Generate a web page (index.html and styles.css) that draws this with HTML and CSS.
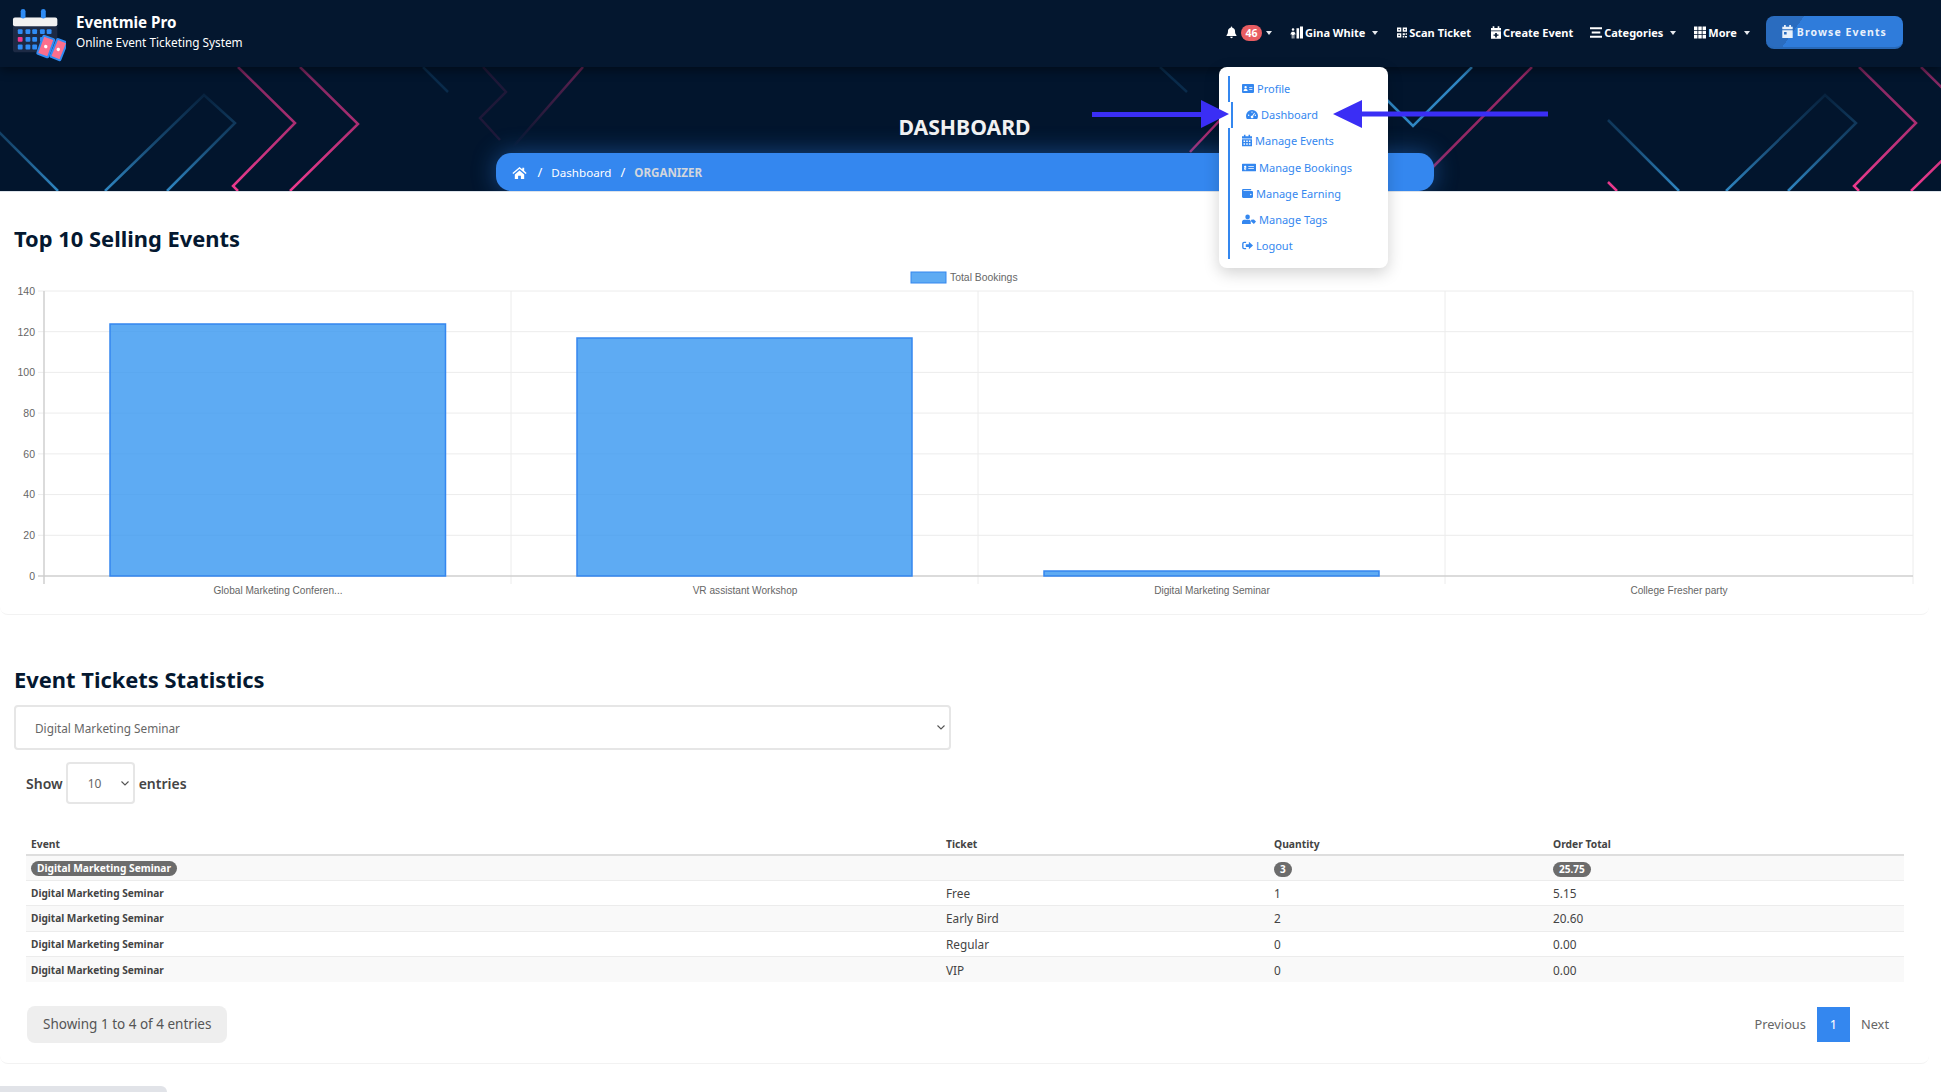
FILE: index.html
```html
<!DOCTYPE html>
<html>
<head>
    <title>Eventmie Pro - Dashboard</title>
    <link rel="stylesheet" href="styles.css">
</head>
<body>
    <svg class="icon-defs" width="0" height="0">
        <symbol id="i-bell" viewBox="1 1 14 15"><path d="M8 1a1 1 0 0 1 1 1v.6A4.5 4.5 0 0 1 12.5 7c0 3 .8 4 1.8 5v1H1.7v-1c1-1 1.8-2 1.8-5A4.5 4.5 0 0 1 7 2.6V2a1 1 0 0 1 1-1zM6.300 14h3.400a1.700 1.700 0 0 1-3.400 0z"/></symbol>
        <symbol id="i-user" viewBox="0 1 15 14"><path d="M7.500 3h3v12h-3zM11.500 1h3.500v14h-3.500zM3.500 3a1.500 1.500 0 1 1 0 3 1.500 1.500 0 0 1 0-3zM2 7h3l1.500 3-1 .6L5 9.500V15H4v-4H3v4H2V9.500l-.6 1.100-1-.6z"/></symbol>
        <symbol id="i-qr" viewBox="1 1 14 14"><path fill-rule="evenodd" d="M1 1h6v6H1zM3 3v2h2V3zM9 1h6v6H9zM11 3v2h2V3zM1 9h6v6H1zM3 11v2h2v-2zM9 9h3v3H9zM13 9h2v2h-2zM9 13h2v2H9zM12 13h3v2h-3z"/></symbol>
        <symbol id="i-cal-plus" viewBox="2 0 12 15"><path fill-rule="evenodd" d="M4 0h2v2h4V0h2v2h2v3H2V2h2zM2 6h12v9H2zM7 8v2H5v1.500h2v2h2v-2h2V10H9V8z"/></symbol>
        <symbol id="i-bars" viewBox="1 2 14 12"><path d="M1 2h14v2.200H1zM3 6.900h10v2.200H3zM1 11.800h14V14H1z"/></symbol>
        <symbol id="i-th" viewBox="1 1 14 14"><path d="M1 1h4v4H1zM6 1h4v4H6zM11 1h4v4h-4zM1 6h4v4H1zM6 6h4v4H6zM11 6h4v4h-4zM1 11h4v4H1zM6 11h4v4H6zM11 11h4v4h-4z"/></symbol>
        <symbol id="i-cal-day" viewBox="2 0 12 15"><path fill-rule="evenodd" d="M4 0h2v2h4V0h2v2h2v3H2V2h2zM2 6h12v9H2zM4 8v3h3V8z"/></symbol>
        <symbol id="i-home" viewBox="0 0 16 16"><path d="M8 2 .4 8.400l1 1.100L8 4l6.600 5.500 1-1.100L13 6.200V3h-2v1.500zM3 10.200V15h3.500v-3.500h3V15H13v-4.800L8 5.800z"/></symbol>
        <symbol id="i-id" viewBox=".5 2.500 15 11"><path fill-rule="evenodd" d="M1.500 2.500h13a1 1 0 0 1 1 1v9a1 1 0 0 1-1 1h-13a1 1 0 0 1-1-1v-9a1 1 0 0 1 1-1zM5 5a1.500 1.500 0 1 0 0 3 1.500 1.500 0 0 0 0-3zM2.500 11h5c0-1.500-1-2.300-2.500-2.300S2.500 9.500 2.500 11zM9.500 6v1.200h4V6zM9.500 8.800V10h4V8.800z"/></symbol>
        <symbol id="i-gauge" viewBox=".5 2.500 15 11.200"><path fill-rule="evenodd" d="M8 2.500a7.500 7.500 0 0 0-6.500 11.200h13A7.500 7.500 0 0 0 8 2.500zM8 4.200a.9.900 0 1 1 0 1.800.9.900 0 0 1 0-1.800zM3.800 8.200a.9.900 0 1 1 0 1.800.9.900 0 0 1 0-1.800zM12.200 8.200a.9.900 0 1 1 0 1.800.9.900 0 0 1 0-1.800zM10.800 5.900l.9.6-2.400 3.700a1.600 1.600 0 1 1-1-.6z"/></symbol>
        <symbol id="i-cal" viewBox="1.500 0 13 15"><path fill-rule="evenodd" d="M4 0h2v2h4V0h2v2h2.500v3h-13V2H4zM1.500 6h13v9h-13zM3.500 7.500v2h2v-2zM7 7.500v2h2v-2zM10.500 7.500v2h2v-2zM3.500 11v2h2v-2zM7 11v2h2v-2zM10.500 11v2h2v-2z"/></symbol>
        <symbol id="i-money" viewBox="0 2.500 20 11"><path fill-rule="evenodd" d="M1 2.500h18a1 1 0 0 1 1 1v9a1 1 0 0 1-1 1H1a1 1 0 0 1-1-1v-9a1 1 0 0 1 1-1zM4 5v1H3v1.500h2v.5H3v3h1v1h1v-1h1V9.500H4V9h2V6H5V5zM9 6v1h8V6zM9 9v1h8V9z"/></symbol>
        <symbol id="i-wallet" viewBox=".5 2 15 12"><path fill-rule="evenodd" d="M2 2h11v1.500H2.500v1H14a1.500 1.500 0 0 1 1.500 1.500v6.500A1.500 1.500 0 0 1 14 14H2a1.500 1.500 0 0 1-1.500-1.500v-9A1.500 1.500 0 0 1 2 2zM12.500 8.500a1 1 0 1 0 0 2 1 1 0 0 0 0-2z"/></symbol>
        <symbol id="i-user-tag" viewBox="0 1.500 20 14"><path d="M8 1.500a3.300 3.300 0 1 1 0 6.600 3.300 3.300 0 0 1 0-6.600zM3 9h8l1.500 1.500V15H0v-2.500C0 10.500 1 9 3 9zM13 9l4-.5 3 3-3 3.500-4-3.500z"/></symbol>
        <symbol id="i-logout" viewBox="0 2 16 12"><path d="M10 2.500 16 8l-6 5.500V10H5.500V6H10zM6 2.500v2H3a.8.800 0 0 0-.8.8v5.400a.8.800 0 0 0 .8.8h3v2H3a2.800 2.800 0 0 1-2.800-2.800V5.300A2.800 2.800 0 0 1 3 2.500z"/></symbol>
    </svg>

    <header class="topbar">
        <a class="brand">
            <svg class="brand-logo" viewBox="0 0 56 60">
                <rect x="1" y="13" width="46" height="36" rx="3" fill="#1d2a44"/>
                <rect x="1" y="13" width="46" height="9" rx="2" fill="#f1f1f1"/>
                <rect x="9" y="4" width="5" height="10" rx="2.500" fill="#2f8cf5"/>
                <rect x="30" y="4" width="5" height="10" rx="2.500" fill="#2f8cf5"/>
                <g fill="#2f8cf5">
                    <rect x="6" y="25" width="5" height="5" rx="1"/><rect x="14" y="25" width="5" height="5" rx="1"/><rect x="21" y="25" width="5" height="5" rx="1"/><rect x="29" y="25" width="5" height="5" rx="1"/><rect x="36" y="25" width="5" height="5" rx="1"/>
                    <rect x="14" y="33" width="5" height="5" rx="1"/><rect x="21" y="33" width="5" height="5" rx="1"/><rect x="29" y="33" width="5" height="5" rx="1"/>
                    <rect x="6" y="41" width="5" height="5" rx="1"/><rect x="14" y="41" width="5" height="5" rx="1"/><rect x="21" y="41" width="5" height="5" rx="1"/>
                </g>
                <rect x="6" y="33" width="5" height="5" rx="1" fill="#f0388f"/>
                <g transform="rotate(20 35 43)"><rect x="29" y="33" width="12" height="20" rx="1" fill="#fb6f8d" stroke="#2f8cf5" stroke-width="2"/><circle cx="35" cy="43" r="1.800" fill="#fff"/></g>
                <g transform="rotate(22 48 46)"><rect x="43" y="36" width="11" height="20" rx="1" fill="#fb6f8d" stroke="#2f8cf5" stroke-width="2"/><circle cx="48" cy="46" r="1.800" fill="#fff"/></g>
            </svg>
            <span class="brand-text">
                <strong>Eventmie Pro</strong>
                <span>Online Event Ticketing System</span>
            </span>
        </a>
        <nav class="topnav">
            <a class="nav-item nav-bell"><svg class="ico ico-w11"><use href="#i-bell"/></svg><span class="badge">46</span><i class="caret"></i></a>
            <a class="nav-item nav-user"><svg class="ico ico-w13"><use href="#i-user"/></svg>Gina White<i class="caret"></i></a>
            <a class="nav-item nav-scan"><svg class="ico ico-w10"><use href="#i-qr"/></svg>Scan Ticket</a>
            <a class="nav-item nav-create"><svg class="ico ico-w10"><use href="#i-cal-plus"/></svg>Create Event</a>
            <a class="nav-item"><svg class="ico ico-w12"><use href="#i-bars"/></svg>Categories<i class="caret"></i></a>
            <a class="nav-item"><svg class="ico ico-w12"><use href="#i-th"/></svg>More<i class="caret"></i></a>
            <a class="browse-btn"><svg class="ico ico-w11"><use href="#i-cal-day"/></svg>Browse Events</a>
        </nav>
    </header>

    <section class="hero">
        <svg class="hero-lines" viewBox="0 67 1941 124" width="1941" height="124">
            <defs>
                <linearGradient id="fade-blue" gradientUnits="userSpaceOnUse" x1="0" y1="95" x2="0" y2="191">
                    <stop offset="0" stop-color="#2f86c2" stop-opacity=".12"/>
                    <stop offset=".5" stop-color="#2f86c2" stop-opacity=".45"/>
                    <stop offset="1" stop-color="#2f86c2"/>
                </linearGradient>
                <linearGradient id="fade-pink" gradientUnits="userSpaceOnUse" x1="0" y1="67" x2="0" y2="191">
                    <stop offset="0" stop-color="#e8358a" stop-opacity=".5"/>
                    <stop offset="1" stop-color="#ee3a8e"/>
                </linearGradient>
                <linearGradient id="fade-down" gradientUnits="userSpaceOnUse" x1="0" y1="67" x2="0" y2="147">
                    <stop offset="0" stop-color="#c52f78" stop-opacity=".5"/>
                    <stop offset="1" stop-color="#c52f78" stop-opacity="0"/>
                </linearGradient>
                <g id="tile" fill="none" stroke-width="2.500">
                    <g stroke="url(#fade-blue)">
                        <path d="M-13 120 58 191"/>
                        <path d="M105 191 204 95 235 123 167 191"/>
                    </g>
                    <g stroke="url(#fade-pink)">
                        <path d="M238 67 295 123 233 186 238 191"/>
                        <path d="M300 67 358 124 290 191"/>
                        <path d="M-13 182-4 191"/>
                    </g>
                    <path d="M423 67 448 92" stroke="#2f86c2" opacity=".2"/>
                    <path d="M483 67 506 92 480 118 500 140" stroke="#c52f78" opacity=".15"/>
                    <path d="M583 67 513 147" stroke="url(#fade-down)"/>
                    <path d="M1160 67 1187 92" stroke="#2f86c2" opacity=".2"/>
                    <path d="M1270 67 1190 152" stroke="#d0307d" opacity=".8"/>
                    <path d="M1387 100 1413 126 1472 67" stroke="#2f86c2"/>
                    <path d="M1532 67 1433 167" stroke="#c52f78" opacity=".75"/>
                </g>
            </defs>
            <use href="#tile"/>
            <use href="#tile" x="1621"/>
        </svg>
        <div class="hero-inner">
            <h1>DASHBOARD</h1>
            <div class="crumbs">
                <svg class="ico crumb-home"><use href="#i-home"/></svg>
                <span class="crumb-sep">/</span>
                <a>Dashboard</a>
                <span class="crumb-sep">/</span>
                <b>ORGANIZER</b>
            </div>
        </div>
    </section>

    <!-- profile menu, open -->
    <div class="menu">
        <a class="menu-item"><svg class="ico ico-w12"><use href="#i-id"/></svg>Profile</a>
        <a class="menu-item is-active"><svg class="ico ico-w12"><use href="#i-gauge"/></svg>Dashboard</a>
        <a class="menu-item"><svg class="ico ico-w10"><use href="#i-cal"/></svg>Manage Events</a>
        <a class="menu-item"><svg class="ico ico-w14"><use href="#i-money"/></svg>Manage Bookings</a>
        <a class="menu-item"><svg class="ico ico-w11"><use href="#i-wallet"/></svg>Manage Earning</a>
        <a class="menu-item"><svg class="ico ico-w14"><use href="#i-user-tag"/></svg>Manage Tags</a>
        <a class="menu-item"><svg class="ico ico-w11"><use href="#i-logout"/></svg>Logout</a>
    </div>

    <!-- annotation arrows -->
    <svg class="arrows" viewBox="0 0 1941 140" width="1941" height="140">
        <path d="M1092 112H1201V100L1229 114 1201 128V117H1092z"/>
        <path d="M1548 111.500H1362V100L1333 114 1362 128V116.500H1548z"/>
    </svg>

    <main>
        <section class="panel panel-chart">
            <h2>Top 10 Selling Events</h2>
            <svg class="chart" viewBox="0 265 1929 345" width="1929" height="345">
                <rect class="legend-box" x="911" y="272" width="35" height="11"/>
                <text class="legend" x="950" y="281">Total Bookings</text>

                <g class="grid">
                    <path d="M38 291H1913M38 331.700H1913M38 372.400H1913M38 413.100H1913M38 453.900H1913M38 494.600H1913M38 535.300H1913"/>
                    <path d="M511 291V584M978 291V584M1445 291V584M1913 291V584"/>
                </g>
                <path class="axis" d="M44 291V584M38 576H1913"/>

                <rect class="bar" x="110" y="324" width="335.5" height="252"/>
                <rect class="bar" x="577" y="338" width="335" height="238"/>
                <rect class="bar" x="1044" y="571" width="335" height="5"/>

                <g class="ticks">
                    <text x="35" y="295">140</text>
                    <text x="35" y="336">120</text>
                    <text x="35" y="376">100</text>
                    <text x="35" y="417">80</text>
                    <text x="35" y="458">60</text>
                    <text x="35" y="498">40</text>
                    <text x="35" y="539">20</text>
                    <text x="35" y="580">0</text>
                </g>
                <g class="labels">
                    <text x="278" y="594">Global Marketing Conferen...</text>
                    <text x="745" y="594">VR assistant Workshop</text>
                    <text x="1212" y="594">Digital Marketing Seminar</text>
                    <text x="1679" y="594">College Fresher party</text>
                </g>
            </svg>
        </section>

        <section class="panel panel-stats">
            <h2>Event Tickets Statistics</h2>
            <select class="event-select">
                <option>Digital Marketing Seminar</option>
            </select>

            <div class="length-row">
                <label>Show</label>
                <select class="length-select"><option>10</option></select>
                <label>entries</label>
            </div>

            <table class="stats">
                <thead>
                    <tr><th>Event</th><th>Ticket</th><th>Quantity</th><th>Order Total</th></tr>
                </thead>
                <tbody>
                    <tr>
                        <td class="name"><span class="pill">Digital Marketing Seminar</span></td>
                        <td></td>
                        <td><span class="pill pill-num">3</span></td>
                        <td><span class="pill pill-num">25.75</span></td>
                    </tr>
                    <tr><td class="name">Digital Marketing Seminar</td><td>Free</td><td>1</td><td>5.15</td></tr>
                    <tr><td class="name">Digital Marketing Seminar</td><td>Early Bird</td><td>2</td><td>20.60</td></tr>
                    <tr><td class="name">Digital Marketing Seminar</td><td>Regular</td><td>0</td><td>0.00</td></tr>
                    <tr><td class="name">Digital Marketing Seminar</td><td>VIP</td><td>0</td><td>0.00</td></tr>
                </tbody>
            </table>

            <div class="table-foot">
                <div class="info">Showing 1 to 4 of 4 entries</div>
                <div class="pager">
                    <a>Previous</a>
                    <a class="current">1</a>
                    <a>Next</a>
                </div>
            </div>
        </section>
    </main>

    <div class="status-strip"></div>
</body>
</html>
```

FILE: styles.css
```css
* {
    box-sizing: border-box;
}
body {
    margin: 0;
    font-family: "Noto Sans", "Open Sans", sans-serif;
    background: #fff;
    color: #333;
    overflow-x: hidden;
}
.icon-defs {
    position: absolute;
}
.ico {
    width: 13px;
    height: 13px;
    fill: currentColor;
    flex: none;
}
.ico-w10 { width: 10px; }
.ico-w11 { width: 11px; }
.ico-w12 { width: 12px; }
.ico-w13 { width: 13px; }
.ico-w14 { width: 14px; }

/* top bar */
.topbar {
    height: 67px;
    display: flex;
    align-items: center;
    justify-content: space-between;
    padding: 0 38px 0 12px;
    background: #04172f;
    color: #fff;
    position: relative;
    z-index: 2;
    box-shadow: 0 3px 10px rgba(0, 0, 0, 0.45);
}
.brand {
    display: flex;
    align-items: center;
    gap: 10px;
}
.brand-logo {
    width: 54px;
    height: 58px;
}
.brand-text {
    display: flex;
    flex-direction: column;
    font-size: 11.8px;
    line-height: 20px;
    margin-top: -4px;
}
.brand-text strong {
    font-size: 15.2px;
    font-weight: 700;
}
.topnav {
    display: flex;
    align-items: center;
    margin-top: -2px;
}
.nav-item {
    display: flex;
    align-items: center;
    gap: 2px;
    font-size: 11px;
    font-weight: 700;
    margin-right: 18px;
    white-space: nowrap;
}
.nav-user {
    margin-right: 19px;
}
.nav-scan {
    margin-right: 20px;
}
.nav-create {
    margin-right: 17px;
}
.nav-item .caret {
    margin-left: 5px;
}
.nav-bell {
    gap: 4px;
}
.nav-bell .caret {
    margin-left: 0;
}
.caret {
    width: 0;
    height: 0;
    border-left: 3.5px solid transparent;
    border-right: 3.5px solid transparent;
    border-top: 4px solid #e6e9ee;
}
.badge {
    background: #e85d62;
    border-radius: 10px;
    width: 21px;
    text-align: center;
    font-size: 10.5px;
    line-height: 16px;
}
.browse-btn {
    display: flex;
    align-items: center;
    gap: 4px;
    height: 33px;
    padding: 0 16px 0 16px;
    margin-left: -2px;
    border-radius: 8px;
    font-size: 10.5px;
    font-weight: 700;
    letter-spacing: 1.1px;
    color: #e9f1fb;
    background: linear-gradient(125deg, #2a6cbf 24%, #2f7cdb 24%);
    border-bottom: 2px solid #2869b8;
}

/* page title band */
.hero {
    height: 125px;
    position: relative;
    background: #02152d;
    border-bottom: 1px solid #dde3ea;
    overflow: hidden;
    color: #fff;
}
.hero-lines {
    position: absolute;
    top: 0;
    left: 0;
}
.hero-inner {
    position: relative;
    height: 124px;
    width: 1929px;
    display: flex;
    flex-direction: column;
    align-items: center;
    justify-content: flex-end;
}
.hero h1 {
    margin: 0 0 12px;
    font-size: 21.2px;
    line-height: 28px;
    font-weight: 700;
    color: #f2f2f2;
}
.crumbs {
    width: 938px;
    height: 38px;
    display: flex;
    align-items: center;
    gap: 9px;
    padding-left: 16px;
    background: #3487ef;
    border-radius: 15px;
    box-shadow: 0 0 24px rgba(52, 135, 239, 0.45);
    font-size: 11.6px;
}
.crumb-home {
    width: 15px;
    height: 15px;
    margin-right: 2px;
}
.crumb-sep {
    font-size: 13px;
}
.crumbs b {
    color: #d2d6dc;
    font-weight: 700;
}

/* dropdown */
.menu {
    position: absolute;
    top: 67px;
    left: 1219px;
    width: 169px;
    height: 201px;
    padding: 8.5px 0 0 9px;
    background: #fff;
    border-radius: 8px;
    box-shadow: 0 5px 16px rgba(0, 0, 0, 0.18);
    z-index: 3;
}
.menu-item {
    display: flex;
    align-items: center;
    gap: 3px;
    height: 26.2px;
    padding-left: 12px;
    border-left: 2px solid #3487ef;
    font-size: 11px;
    color: #3487ef;
    white-space: nowrap;
}
.menu-item.is-active {
    margin-left: 3px;
    padding-left: 13px;
}
.arrows {
    position: absolute;
    top: 0;
    left: 0;
    fill: #3a2ef5;
    z-index: 4;
    pointer-events: none;
}

/* panels */
.panel {
    width: 1929px;
    padding: 0 14px;
    border-bottom: 1px solid #f2f2f2;
    border-radius: 0 0 8px 8px;
}
.panel h2 {
    margin: 0;
    font-size: 21.9px;
    line-height: 32px;
    font-weight: 700;
    color: #041830;
}
.panel-chart {
    height: 423px;
    padding-top: 31px;
}
.chart {
    display: block;
    margin: 10px 0 0 -14px;
    font-family: "Liberation Sans", Arial, sans-serif;
}
.grid path {
    fill: none;
    stroke: #ececec;
    stroke-width: 1;
}
.axis {
    fill: none;
    stroke: #cfcfcf;
    stroke-width: 1.5;
}
.bar {
    fill: rgba(54, 150, 240, 0.8);
    stroke: #3487ef;
    stroke-width: 1.5;
}
.legend-box {
    fill: rgba(54, 150, 240, 0.8);
    stroke: #3487ef;
}
.legend {
    font-size: 10.4px;
    fill: #666;
}
.ticks text {
    font-size: 10.5px;
    fill: #666;
    text-anchor: end;
}
.labels text {
    font-size: 10.1px;
    fill: #666;
    text-anchor: middle;
}

.panel-stats {
    height: 449px;
    padding-top: 49px;
}
.event-select,
.length-select {
    appearance: none;
    border: 2px solid #e6e6e6;
    border-radius: 4px;
    font-family: inherit;
    color: #666;
    background: #fff url("data:image/svg+xml,%3Csvg xmlns='http://www.w3.org/2000/svg' width='8' height='5'%3E%3Cpath d='M.5.5 4 4 7.500.5' fill='none' stroke='%23555' stroke-width='1.100'/%3E%3C/svg%3E") no-repeat right 4px center;
}
.event-select {
    display: block;
    width: 937px;
    height: 45px;
    margin-top: 9px;
    padding-left: 19px;
    font-size: 11.8px;
}
.length-row {
    display: flex;
    align-items: center;
    gap: 3px;
    height: 42px;
    margin-top: 12px;
    padding-left: 12px;
    font-size: 14px;
    font-weight: 600;
    color: #444;
}
.length-select {
    width: 69px;
    height: 42px;
    margin-right: 1px;
    padding-left: 20px;
    font-size: 12px;
}
.stats {
    width: 1878px;
    margin: 29px 0 0 12px;
    border-collapse: collapse;
    table-layout: fixed;
    font-size: 11.8px;
    color: #444;
}
.stats th {
    height: 22px;
    padding: 0 0 0 5px;
    border-bottom: 2px solid #dedede;
    font-size: 10.3px;
    font-weight: 700;
    text-align: left;
}
.stats th:nth-child(1) {
    width: 915px;
}
.stats th:nth-child(2) {
    width: 328px;
}
.stats th:nth-child(3) {
    width: 279px;
}
.stats td {
    height: 25.4px;
    padding: 0 0 0 5px;
    border-bottom: 1px solid #ececec;
}
.stats tbody tr:last-child td {
    border-bottom: 0;
}
.stats tbody tr:nth-child(odd) {
    background: #f9f9f9;
}
.stats td.name {
    font-size: 10.1px;
    font-weight: 700;
}
.pill {
    display: inline-block;
    vertical-align: middle;
    padding: 0 6px;
    border-radius: 9px;
    background: #6c6c6c;
    color: #fff;
    font-size: 10.2px;
    font-weight: 700;
    line-height: 15px;
}
.pill-num {
    font-size: 10px;
}
.table-foot {
    display: flex;
    justify-content: space-between;
    align-items: center;
    margin: 24px 26px 0 13px;
}
.info {
    height: 37px;
    line-height: 37px;
    padding: 0 16px;
    background: #eee;
    border-radius: 8px;
    font-size: 13.5px;
    color: #555;
}
.pager {
    display: flex;
    align-items: center;
    gap: 11px;
    font-size: 12.8px;
    color: #666;
}
.pager .current {
    width: 33px;
    height: 35px;
    line-height: 35px;
    text-align: center;
    background: #3487ef;
    color: #fff;
}
.status-strip {
    width: 167px;
    height: 6px;
    margin-top: 22px;
    background: #e1e3e8;
    border-radius: 0 6px 0 0;
}
```
